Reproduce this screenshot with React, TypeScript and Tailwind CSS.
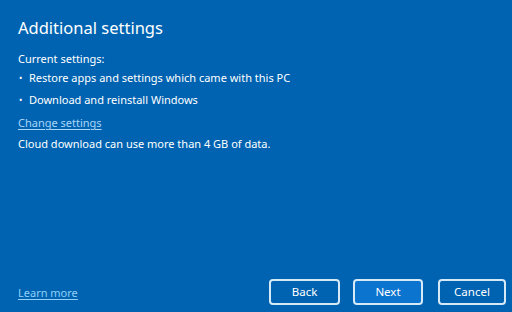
export default function App() {
  return (
    <div
      className="w-[512px] h-[312px] bg-[#0063b1] text-white flex flex-col pl-[18px] pr-[6px] pt-[16px] pb-[7px]"
      style={{ fontFamily: '"Noto Sans", "Open Sans", sans-serif' }}
    >
      <h1 className="text-[16.5px] leading-[24px] font-normal">Additional settings</h1>

      <div className="mt-[9px] text-[11px] leading-[19px]">
        <p>Current settings:</p>
        <ul className="flex flex-col gap-[3px]">
          <li className="flex items-center">
            <span className="w-[11px] pl-[1px] text-[9px]">•</span>
            <span>Restore apps and settings which came with this PC</span>
          </li>
          <li className="flex items-center">
            <span className="w-[11px] pl-[1px] text-[9px]">•</span>
            <span>Download and reinstall Windows</span>
          </li>
        </ul>
        <a href="#" className="block mt-[4px] w-fit text-[#a9d6f7] underline underline-offset-2">
          Change settings
        </a>
        <p className="mt-[2px]">Cloud download can use more than 4 GB of data.</p>
      </div>

      <div className="mt-auto flex items-center justify-between">
        <a href="#" className="text-[11px] leading-[19px] text-[#8fcff8] underline underline-offset-2">
          Learn more
        </a>
        <div className="flex">
          <button className="w-[71px] h-[26px] rounded-[4px] border-2 border-[#d6e9f7] text-[11.5px]">
            Back
          </button>
          <button className="ml-[13px] w-[70px] h-[26px] rounded-[4px] border-2 border-[#d6e9f7] bg-[#0b74cf] text-[11.5px]">
            Next
          </button>
          <button className="ml-[15px] w-[68px] h-[26px] rounded-[4px] border-2 border-[#d6e9f7] text-[11.5px]">
            Cancel
          </button>
        </div>
      </div>
    </div>
  );
}
